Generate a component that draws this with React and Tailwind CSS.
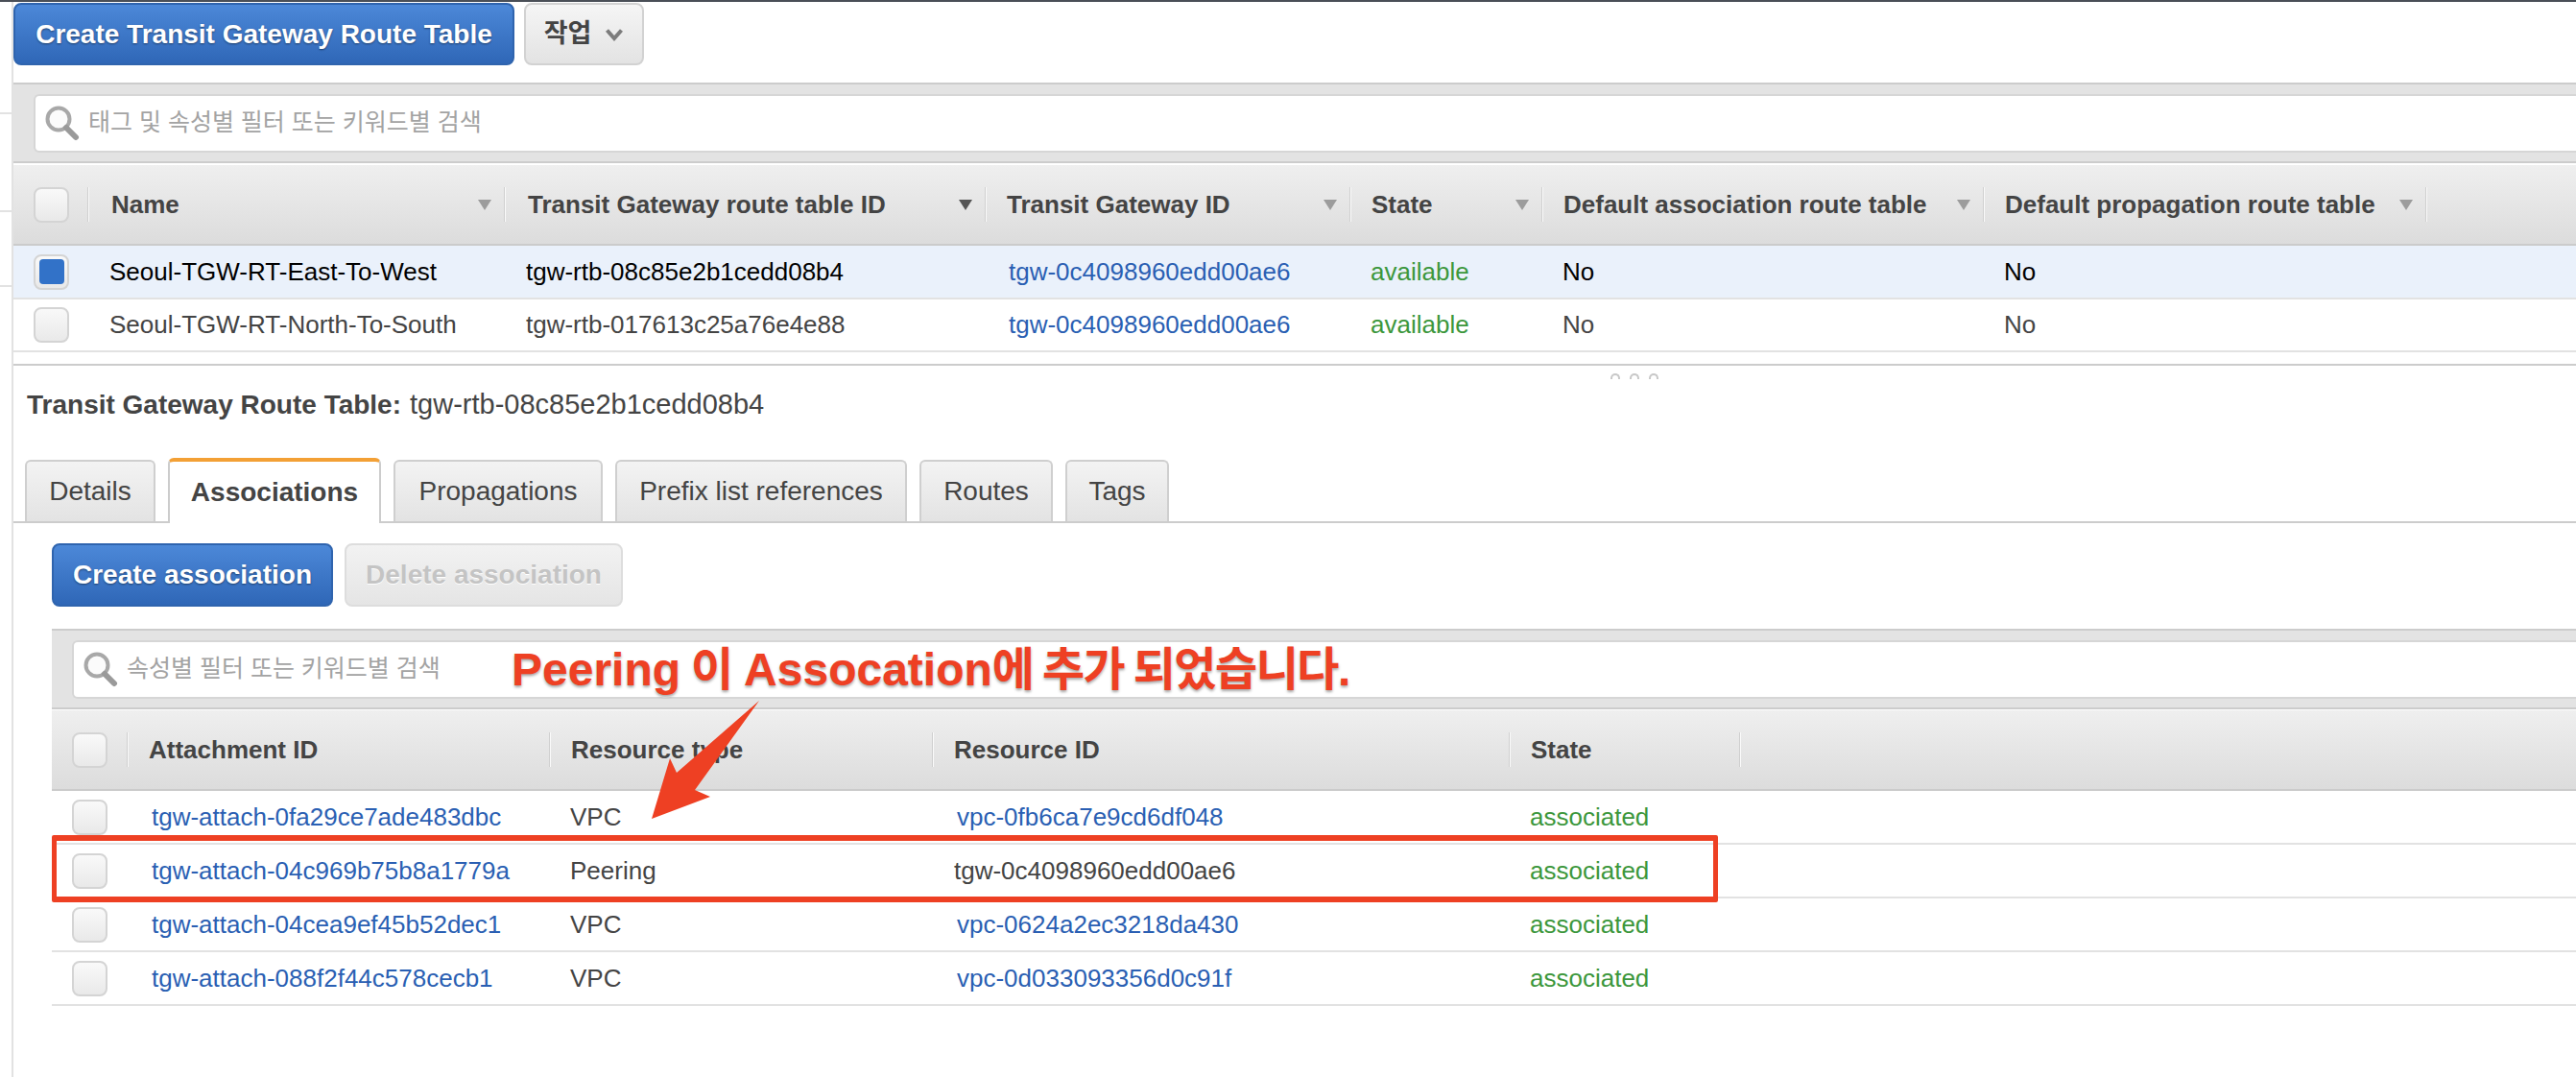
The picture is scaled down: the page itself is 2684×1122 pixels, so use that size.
import React from 'react';

function Check({ selected }) {
    return (
        <div className="w-[37px] h-[37px] rounded-lg border-2 border-[#d4d4d4] bg-gradient-to-b from-[#f9f9f9] to-[#e9e9e9] flex items-center justify-center">
            {selected && <div className="w-[26px] h-[26px] rounded-[4px] bg-[#3272c8]" />}
        </div>
    );
}

function Sep() {
    return <div className="w-[2px] h-9 shrink-0 bg-[#fafafa] border-l border-[#cfcfcf]" />;
}

function Arrow({ dark }) {
    return (
        <svg width="14" height="12" viewBox="0 0 14 12" className="shrink-0 mr-[13px]">
            <path d="M0 1h14L7 12z" fill={dark ? '#555555' : '#9c9c9c'} />
        </svg>
    );
}

function Search() {
    return (
        <svg width="38" height="38" viewBox="0 0 38 38" className="shrink-0">
            <circle cx="15" cy="15" r="11.5" fill="#fbfbfb" stroke="#a8a8a8" strokeWidth="4" />
            <path d="M23 24l10 10" stroke="#9a9a9a" strokeWidth="6" strokeLinecap="round" />
        </svg>
    );
}

function FilterBar({ text, className }) {
    return (
        <div className={`h-[84px] flex items-center bg-[#e3e3e3] border-y-2 border-[#cccccc] ${className}`}>
            <div className="flex-1 h-[61px] flex items-center gap-2 pl-[9px] bg-white border-2 border-r-0 border-[#d6d6d6] rounded-l-md">
                <Search />
                <span className="text-[25px] text-[#a3a3a3]">{text}</span>
            </div>
        </div>
    );
}

function HeaderRow({ columns, checkW, className }) {
    return (
        <div className={`h-[84px] flex items-center bg-gradient-to-b from-[#efefef] to-[#dcdcdc] border-b-2 border-[#cbcbcb] ${className}`}>
            <div className="h-9 flex items-center shrink-0" style={{ width: checkW }}>
                <div className="flex-1 pl-[21px]"><Check /></div>
                <Sep />
            </div>
            {columns.map((c) => (
                <div key={c.label} className="flex items-center shrink-0" style={{ width: c.w }}>
                    <span className={`flex-1 text-[26px] font-bold text-[#444444] whitespace-nowrap ${c.wide ? 'pl-[23px]' : 'pl-[21px]'}`}>{c.label}</span>
                    {c.sort && <Arrow dark={c.dark} />}
                    <Sep />
                </div>
            ))}
        </div>
    );
}

function Row({ cells, widths, checkW, selected, className }) {
    return (
        <div className={`flex items-center border-b-2 border-[#e2e2e2] ${selected ? 'bg-[#eaf1fb] text-black' : 'text-[#444444]'} ${className}`}>
            <div className="shrink-0 pl-[21px]" style={{ width: checkW }}><Check selected={selected} /></div>
            {cells.map((c, i) => (
                <div
                    key={i}
                    className={`shrink-0 text-[26px] whitespace-nowrap ${c.link ? 'text-[#2a5fb3]' : ''} ${c.ok ? 'text-[#3c973c]' : ''}`}
                    style={{ width: widths[i], paddingLeft: c.pl ?? 21 }}
                >
                    {c.t}
                </div>
            ))}
        </div>
    );
}

function Tab({ label, active, w }) {
    if (active) {
        return (
            <div className="h-[68px] mb-[-2px] flex items-center justify-center bg-white border-x-2 border-[#cccccc] border-t-4 border-t-[#f3a035] rounded-t-md text-[28px] font-bold text-[#444444] shrink-0" style={{ width: w }}>
                {label}
            </div>
        );
    }
    return (
        <div className="h-[64px] flex items-center justify-center bg-gradient-to-b from-[#f3f3f3] to-[#e3e3e3] border-x-2 border-t-2 border-[#cfcfcf] rounded-t-md text-[28px] text-[#444444] shrink-0" style={{ width: w }}>
            {label}
        </div>
    );
}

const rtColumns = [
    { label: 'Name', w: 434, sort: true, wide: true },
    { label: 'Transit Gateway route table ID', w: 501, sort: true, dark: true, wide: true },
    { label: 'Transit Gateway ID', w: 380, sort: true },
    { label: 'State', w: 200, sort: true },
    { label: 'Default association route table', w: 460, sort: true },
    { label: 'Default propagation route table', w: 461, sort: true },
];
const rtWidths = rtColumns.map((c) => c.w);

const assocColumns = [
    { label: 'Attachment ID', w: 440 },
    { label: 'Resource type', w: 399 },
    { label: 'Resource ID', w: 601 },
    { label: 'State', w: 240 },
];
const assocWidths = assocColumns.map((c) => c.w);

const attachments = [
    ['tgw-attach-0fa29ce7ade483dbc', 'VPC', 'vpc-0fb6ca7e9cd6df048'],
    ['tgw-attach-04c969b75b8a1779a', 'Peering', 'tgw-0c4098960edd00ae6'],
    ['tgw-attach-04cea9ef45b52dec1', 'VPC', 'vpc-0624a2ec3218da430'],
    ['tgw-attach-088f2f44c578cecb1', 'VPC', 'vpc-0d033093356d0c91f'],
];

function Grip() {
    return <span className="w-[10px] h-[6px] rounded-t-full border-2 border-b-0 border-[#c8c8c8]" />;
}

export default function App() {
    return (
        <div className="relative w-[2684px] h-[1122px] overflow-hidden bg-white [font-family:'Liberation_Sans','Noto_Sans_CJK_KR',sans-serif]">
            <div className="h-[2px] bg-[#4a4f57]" />
            <div className="flex h-[1120px]">
                {/* sliver of the side nav */}
                <div className="w-[12px] shrink-0 flex flex-col">
                    <div className="h-[117px] border-b-2 border-[#e2e2e2]" />
                    <div className="h-[102px] border-b-2 border-[#e2e2e2]" />
                    <div className="h-[78px] border-b-2 border-[#e2e2e2]" />
                </div>
                <div className="w-[2px] shrink-0 bg-[#e2e2e2]" />
                <div className="flex-1 min-w-0">
                    {/* toolbar */}
                    <div className="flex gap-[10px] pt-px h-[84px]">
                        <button className="w-[522px] h-[65px] rounded-lg border-2 border-[#2f64ae] bg-gradient-to-b from-[#4c88d8] to-[#2f67b7] text-white text-[28px] font-bold [text-shadow:0_1px_2px_rgba(0,0,0,0.45)]">
                            Create Transit Gateway Route Table
                        </button>
                        <button className="w-[125px] h-[65px] flex items-center justify-center gap-[14px] rounded-lg border-2 border-[#d2d2d2] bg-gradient-to-b from-[#f5f5f5] to-[#e3e3e3] text-[27px] font-bold text-[#444444]">
                            작업
                            <svg width="20" height="14" viewBox="0 0 20 14"><path d="M2.5 2.5L10 11l7.5-8.5" fill="none" stroke="#7c7c7c" strokeWidth="4" /></svg>
                        </button>
                    </div>

                    <FilterBar text="태그 및 속성별 필터 또는 키워드별 검색" className="pl-[21px]" />
                    <div className="h-[2px]" />
                    <HeaderRow columns={rtColumns} checkW={79} />
                    <Row
                        selected
                        className="h-[56px]"
                        checkW={79}
                        widths={rtWidths}
                        cells={[
                            { t: 'Seoul-TGW-RT-East-To-West' },
                            { t: 'tgw-rtb-08c85e2b1cedd08b4' },
                            { t: 'tgw-0c4098960edd00ae6', link: true, pl: 23 },
                            { t: 'available', ok: true, pl: 20 },
                            { t: 'No', pl: 20 },
                            { t: 'No', pl: 20 },
                        ]}
                    />
                    <Row
                        className="h-[55px]"
                        checkW={79}
                        widths={rtWidths}
                        cells={[
                            { t: 'Seoul-TGW-RT-North-To-South' },
                            { t: 'tgw-rtb-017613c25a76e4e88' },
                            { t: 'tgw-0c4098960edd00ae6', link: true, pl: 23 },
                            { t: 'available', ok: true, pl: 20 },
                            { t: 'No', pl: 20 },
                            { t: 'No', pl: 20 },
                        ]}
                    />

                    {/* details pane */}
                    <div className="mt-[12px] border-t-2 border-[#cccccc]">
                        <div className="flex gap-[10px] pl-[1664px] h-[16px] pt-[8px]">
                            <Grip />
                            <Grip />
                            <Grip />
                        </div>
                        <div className="h-[50px] flex items-center pl-[14px] text-[28px] text-[#444444]">
                            <span className="font-bold mr-[9px]">Transit Gateway Route Table:</span>
                            <span className="text-[29px]">tgw-rtb-08c85e2b1cedd08b4</span>
                        </div>
                    </div>

                    {/* tabs */}
                    <div className="mt-[32px] h-[66px] flex items-end pl-[12px] gap-[13px] border-b-2 border-[#cccccc]">
                        <Tab label="Details" w={136} />
                        <Tab label="Associations" active w={222} />
                        <Tab label="Propagations" w={218} />
                        <Tab label="Prefix list references" w={304} />
                        <Tab label="Routes" w={139} />
                        <Tab label="Tags" w={108} />
                    </div>

                    <div className="pl-[40px]">
                        <div className="flex gap-[12px] pt-[21px] h-[110px]">
                            <button className="w-[293px] h-[66px] rounded-lg border-2 border-[#2f64ae] bg-gradient-to-b from-[#4c88d8] to-[#2f67b7] text-white text-[28px] font-bold [text-shadow:0_1px_2px_rgba(0,0,0,0.45)]">
                                Create association
                            </button>
                            <button className="w-[290px] h-[66px] rounded-lg border-2 border-[#dddddd] bg-gradient-to-b from-[#f2f2f2] to-[#e5e5e5] text-[#c4c4c4] text-[28px] font-bold [text-shadow:0_1px_0_#ffffff]">
                                Delete association
                            </button>
                        </div>
                        <FilterBar text="속성별 필터 또는 키워드별 검색" className="pl-[21px]" />
                        <HeaderRow columns={assocColumns} checkW={80} className="mt-[1px]" />
                        {attachments.map((a, i) => (
                            <Row
                                key={a[0]}
                                className="h-[56px]"
                                checkW={80}
                                widths={assocWidths}
                                cells={[
                                    { t: a[0], link: true, pl: 24 },
                                    { t: a[1], pl: 20 },
                                    i === 1 ? { t: a[2], pl: 21 } : { t: a[2], link: true, pl: 24 },
                                    { t: 'associated', ok: true, pl: 20 },
                                ]}
                            />
                        ))}
                    </div>
                </div>
            </div>

            {/* annotation drawn over the page */}
            <div className="absolute left-[533px] top-[662px] text-[48px] leading-[72px] font-bold text-[#ee4023] whitespace-nowrap [word-spacing:-2.4px] [-webkit-text-stroke:5px_#ffffff] [paint-order:stroke_fill] [text-shadow:0_2px_3px_rgba(0,0,0,0.35)]">
                Peering 이 Assocation<span className="tracking-[-1.5px]">에 추가 되었습니다.</span>
            </div>
            <svg className="absolute left-[660px] top-[720px]" width="150" height="150" viewBox="660 720 150 150">
                <path d="M791 730L724 823L740 830L679 853L698 790L705 805Z" fill="#ee4023" />
            </svg>
            <div className="absolute left-[54px] top-[870px] w-[1736px] h-[70px] border-y-[6px] border-x-[5px] border-[#ee4023] rounded-[2px]" />
        </div>
    );
}
